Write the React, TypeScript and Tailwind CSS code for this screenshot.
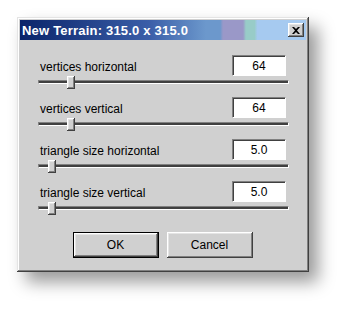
const rows = [
  { label: 'vertices horizontal', value: '64', thumb: 'left-[29px]' },
  { label: 'vertices vertical', value: '64', thumb: 'left-[29px]' },
  { label: 'triangle size horizontal', value: '5.0', thumb: 'left-[10px]' },
  { label: 'triangle size vertical', value: '5.0', thumb: 'left-[10px]' },
];

const raised =
  'shadow-[inset_-1px_-1px_#404040,inset_1px_1px_#ffffff,inset_-2px_-2px_#808080,inset_2px_2px_#e4e4e4]';

export default function App() {
  return (
    <div className="h-[311px] w-[350px] bg-white pl-[17px] pt-[17px] font-['Liberation_Sans',Arial,sans-serif]">
      {/* dialog window */}
      <div
        className={`flex h-[255px] w-[292px] flex-col bg-[#d0d0d0] p-[3px] shadow-[inset_-1px_-1px_#404040,inset_1px_1px_#e4e4e4,inset_-2px_-2px_#808080,inset_2px_2px_#ffffff,9px_10px_16px_rgba(0,0,0,0.4)]`}
      >
        <div className="flex h-[20px] items-center justify-between bg-[linear-gradient(to_right,#0a246a_0%,#3a5ea8_45%,#6c98cc_65%,#6c98cc_70%,#9a98c8_71%,#9a98c8_78%,#98ccc8_79%,#98ccc8_82%,#a6caf0_83%,#a6caf0_100%)] pl-[2px] pr-[2px]">
          <span className="text-[13px] font-bold leading-none tracking-[0.2px] text-white">
            New Terrain: 315.0 x 315.0
          </span>
          <button
            className={`flex h-[14px] w-[16px] items-center justify-center bg-[#d0d0d0] ${raised}`}
          >
            <svg width="8" height="7" viewBox="0 0 8 7">
              <path d="M0 0h2l2 2 2-2h2L5 3.5 8 7H6L4 5 2 7H0l3-3.5z" fill="#000" />
            </svg>
          </button>
        </div>

        <div className="flex flex-col pl-[18px] pr-[17px] pt-[15px]">
          {rows.map((r) => (
            <div key={r.label} className="flex h-[42px] flex-col">
              <div className="flex h-[21px] items-center justify-between pr-[3px]">
                <span className="pl-[2px] pt-[3px] text-[12px] text-black">{r.label}</span>
                <div className="flex h-[21px] w-[54px] items-center justify-center border border-b-white border-l-[#808080] border-r-white border-t-[#808080] bg-white text-[12px] text-black shadow-[inset_1px_1px_#404040]">
                  {r.value}
                </div>
              </div>
              <div className="relative h-[21px]">
                <div className="absolute left-0 right-0 top-[4px] h-[4px] border border-b-white border-l-[#808080] border-r-white border-t-[#808080] bg-[#404040]" />
                <div
                  className={`absolute top-0 h-[13px] w-[8px] bg-[#d0d0d0] ${r.thumb} ${raised}`}
                />
              </div>
            </div>
          ))}
        </div>

        <div className="mt-[9px] flex justify-center gap-[8px] pr-[1px]">
          <button className="h-[26px] w-[86px] border border-black bg-[#d0d0d0] text-[12px] text-black">
            <div className={`flex h-full w-full items-center justify-center ${raised}`}>OK</div>
          </button>
          <button
            className={`flex h-[26px] w-[86px] items-center justify-center bg-[#d0d0d0] text-[12px] text-black ${raised}`}
          >
            Cancel
          </button>
        </div>
      </div>
    </div>
  );
}
